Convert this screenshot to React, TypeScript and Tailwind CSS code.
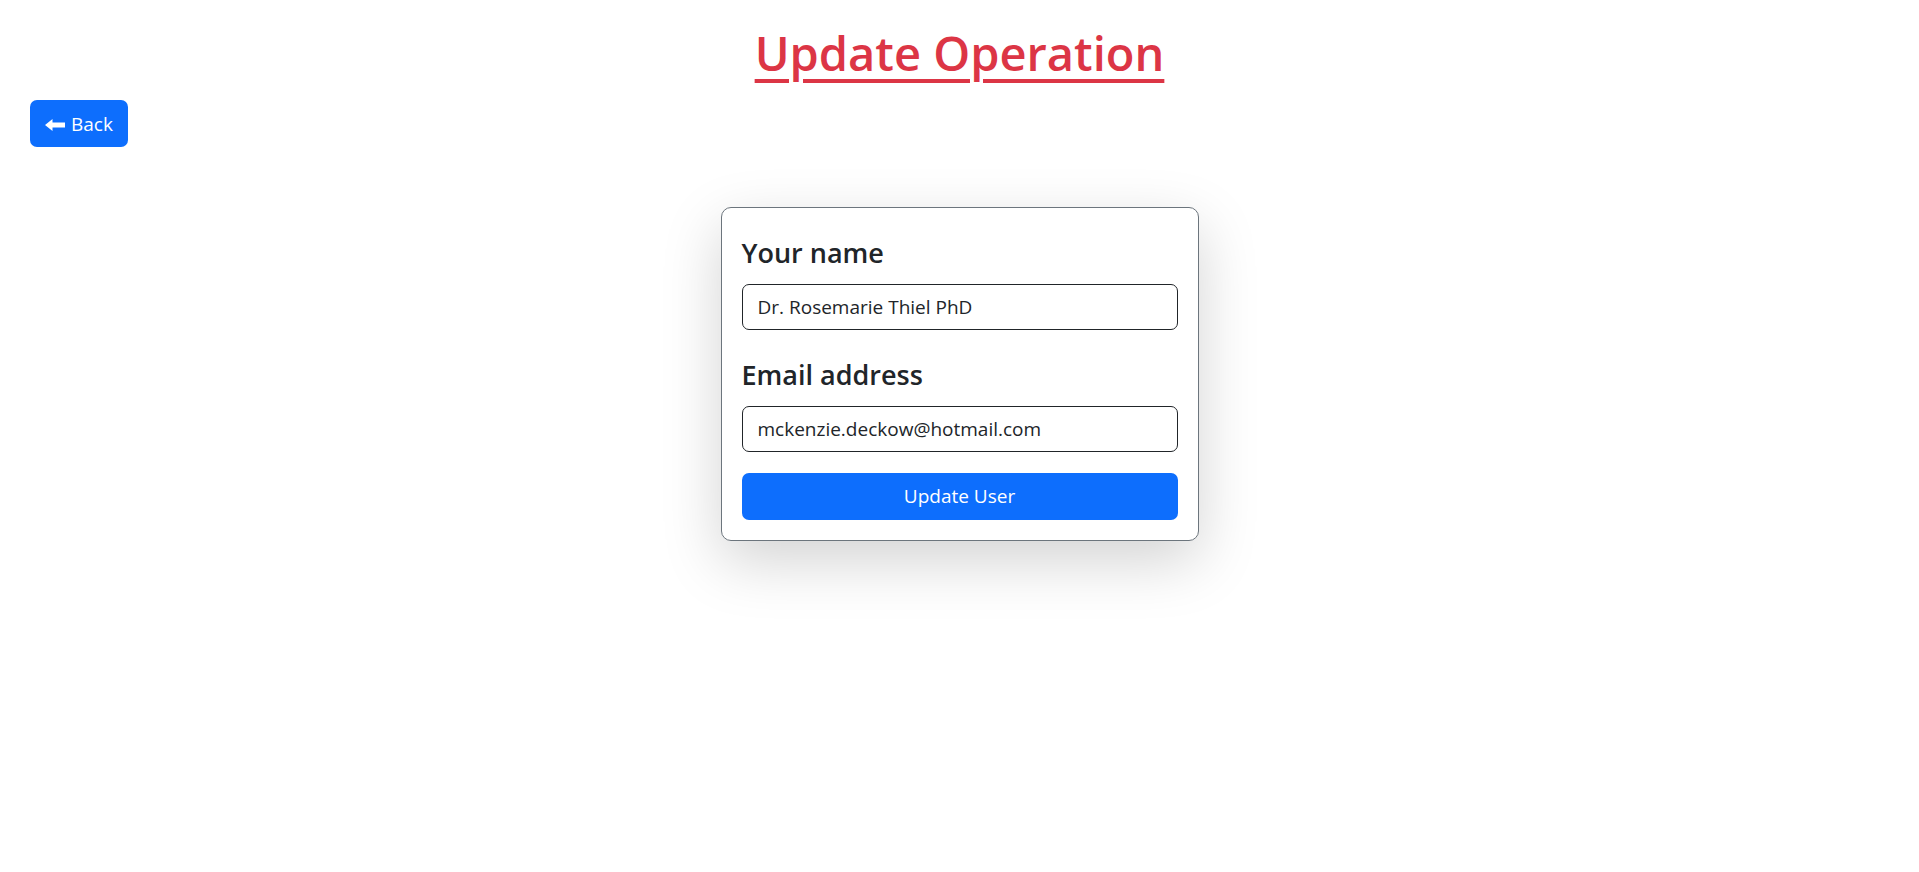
import { useState } from 'react';

const font = { fontFamily: '"Open Sans", "Noto Sans", sans-serif' };

const BackArrow = () => (
  <svg width="20" height="12" viewBox="0 0 20 12" className="shrink-0" aria-hidden="true">
    <path d="M0 6 L7.5 0 V3.5 H20 V8.5 H7.5 V12 Z" fill="currentColor" />
  </svg>
);

const App = () => {
  const [name, setName] = useState('Dr. Rosemarie Thiel PhD');
  const [email, setEmail] = useState('mckenzie.deckow@hotmail.com');

  return (
    <div className="min-h-screen bg-white text-[#212529]" style={font}>
      <h1 className="pt-[23px] text-center text-[47px] leading-[60px] font-semibold text-[#dc3545] underline decoration-[4px] underline-offset-[8px]">
        Update Operation
      </h1>

      <div className="px-[30px] mt-[17px]">
        <button className="flex items-center gap-[6px] h-[47px] pt-[2px] px-[15px] rounded-[7px] bg-[#0d6efd] text-white text-[19px]">
          <BackArrow />
          Back
        </button>
      </div>

      <div className="flex justify-center mt-[60px]">
        <form
          className="w-[478px] px-5 pt-5 pb-5 rounded-[10px] border border-[#6c757d] bg-white shadow-[0_20px_60px_rgba(0,0,0,0.175)]"
          onSubmit={e => e.preventDefault()}
        >
          <label className="block pt-[7px] mb-[13px] text-[27px] leading-[36px] font-semibold">Your name</label>
          <input
            className="block w-full h-[46px] px-[15px] rounded-[7px] border border-[#212529] text-[19px] outline-none mb-5"
            value={name}
            onChange={e => setName(e.target.value)}
          />
          <label className="block pt-[7px] mb-[13px] text-[27px] leading-[36px] font-semibold">Email address</label>
          <input
            className="block w-full h-[46px] px-[15px] rounded-[7px] border border-[#212529] text-[19px] outline-none mb-[21px]"
            value={email}
            onChange={e => setEmail(e.target.value)}
          />
          <button className="block w-full h-[47px] rounded-[7px] bg-[#0d6efd] text-white text-[19px]">
            Update User
          </button>
        </form>
      </div>
    </div>
  );
};

export default App;
